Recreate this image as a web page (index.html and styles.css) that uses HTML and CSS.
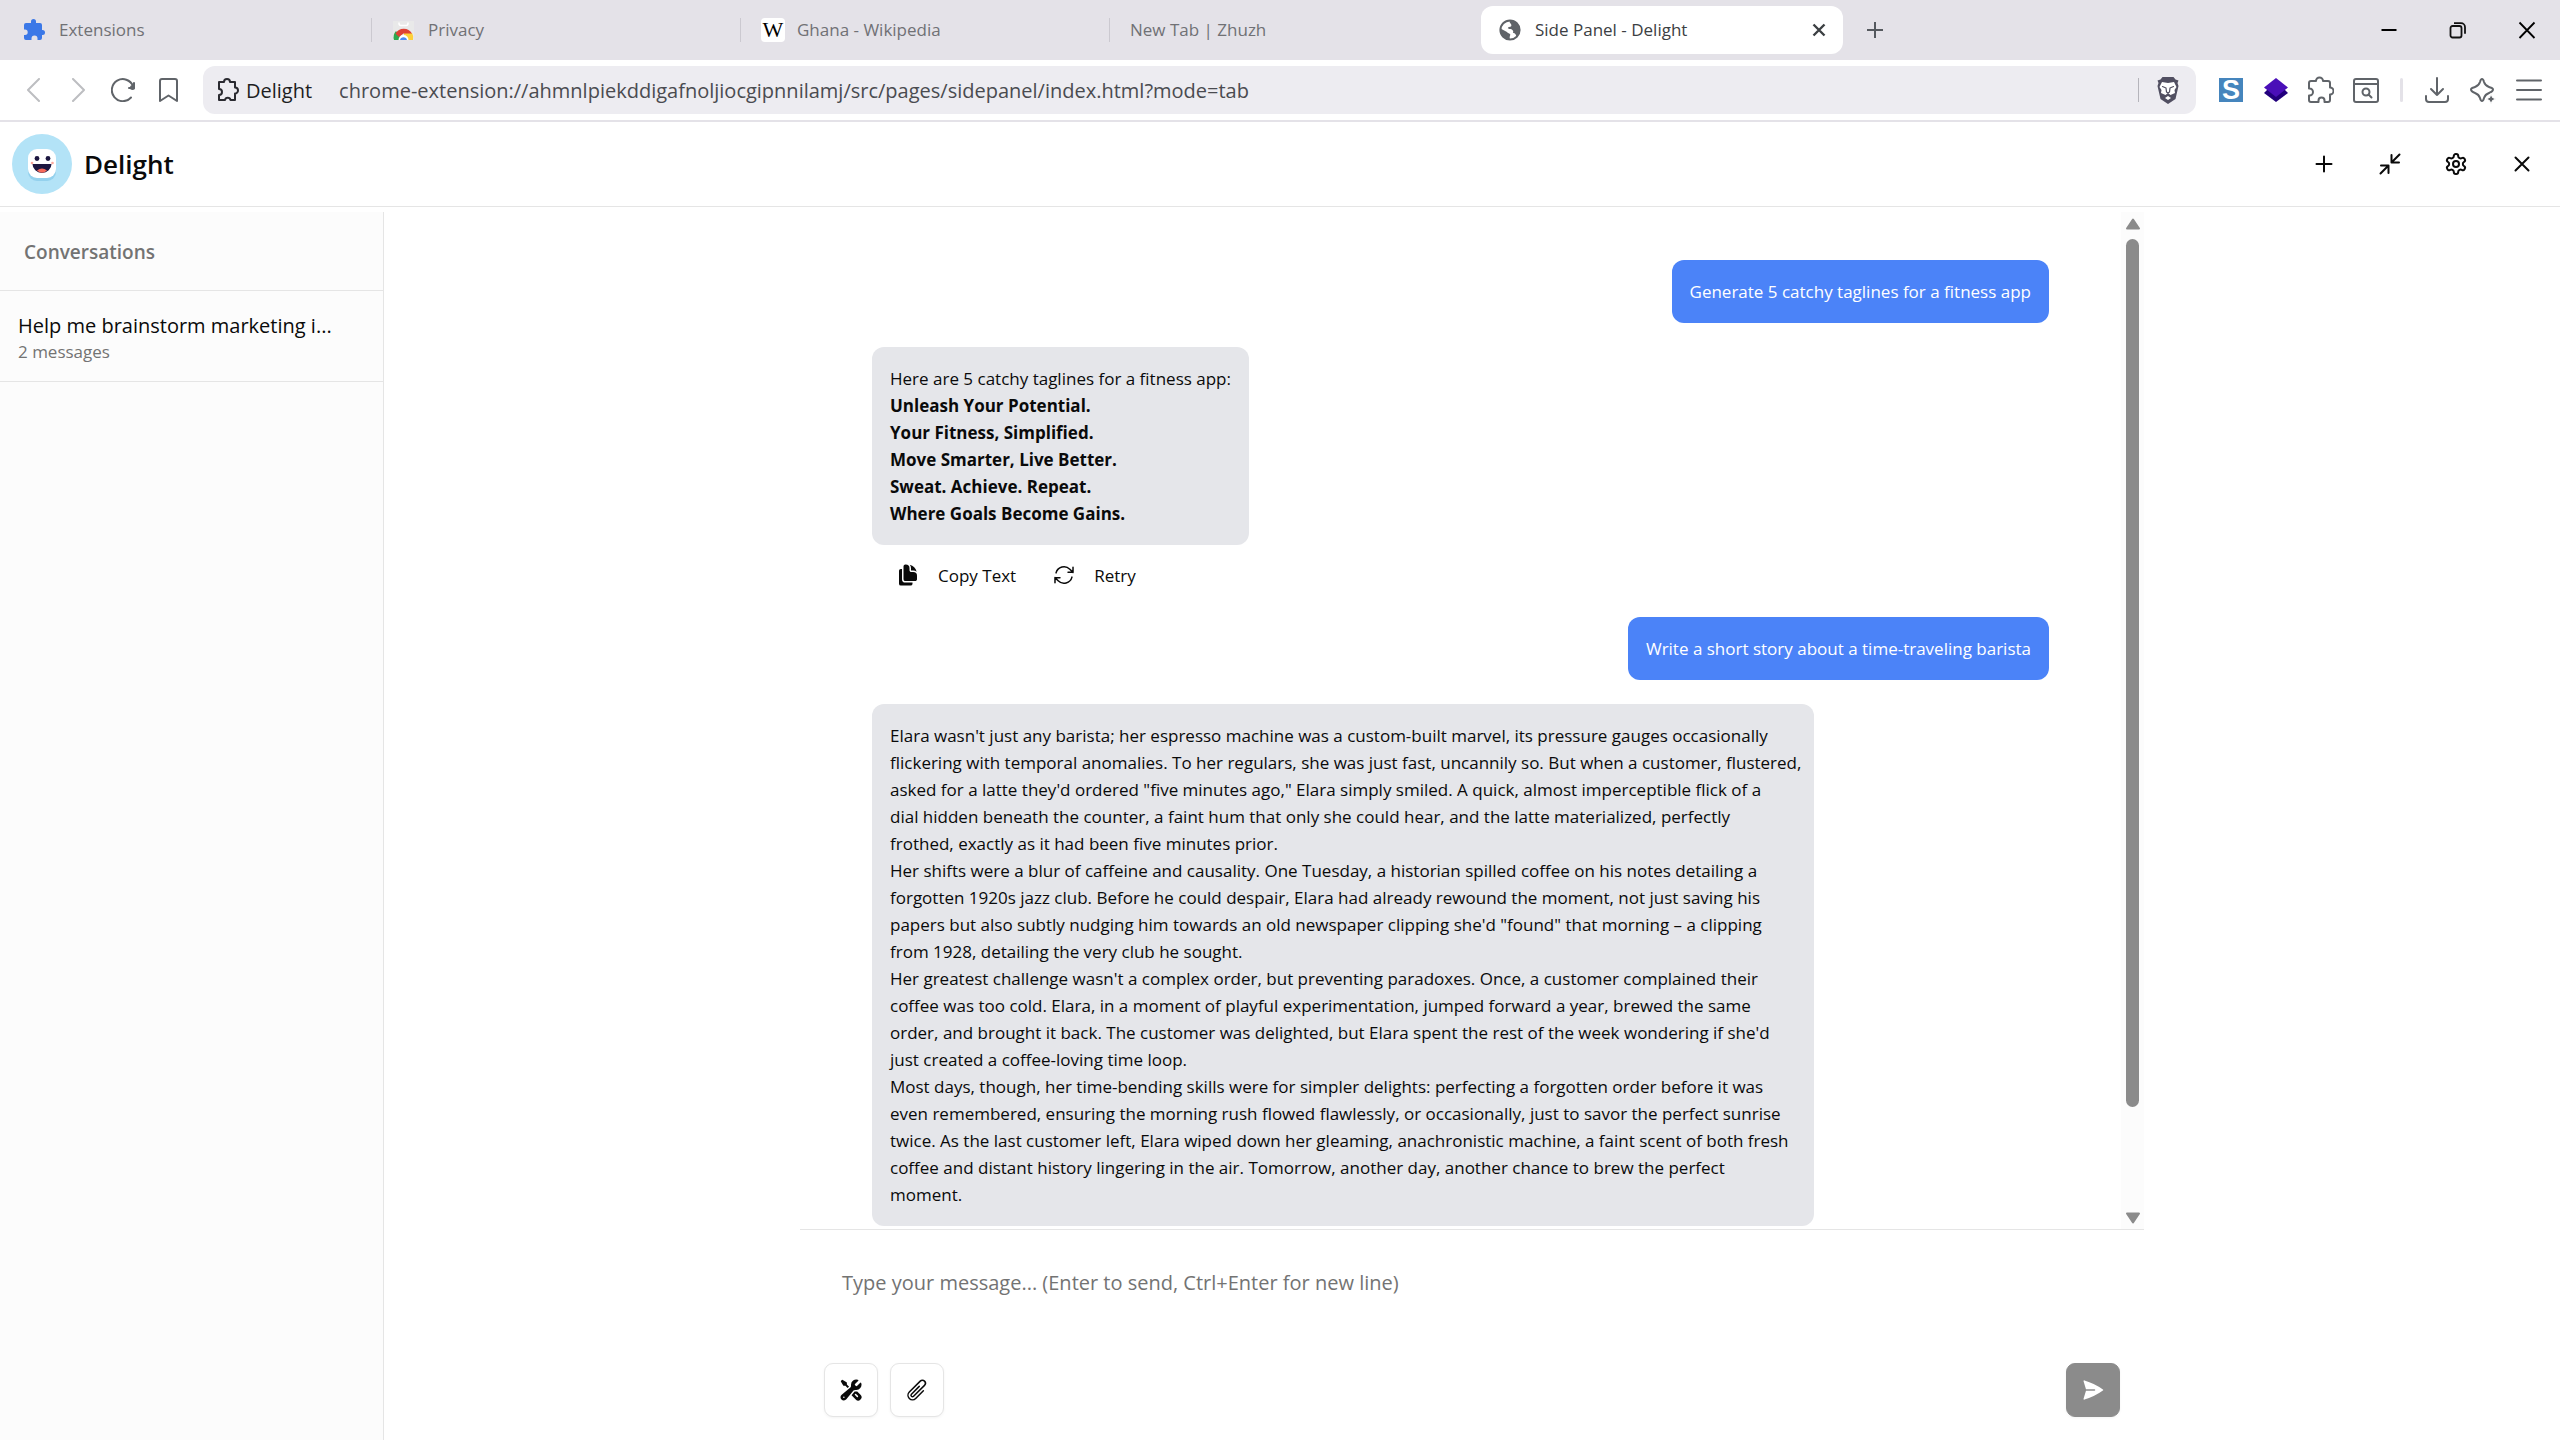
FILE: index.html
```html
<!DOCTYPE html>
<html lang="en">
<head>
<meta charset="utf-8">
<meta name="viewport" content="width=device-width, initial-scale=1">
<title>Side Panel - Delight</title>
<link rel="stylesheet" href="styles.css">
</head>
<body>
<div class="window">

  <div class="tab-strip">
    <nav class="tabs" aria-label="Open tabs">
      <a class="tab tab-first" href="#">
        <svg class="icon" viewBox="0 0 24 24" fill="#3b78e7"><path d="M1 7q0-2 2-2h5V3.500a2.500 2.500 0 0 1 5 0V5h4q2 0 2 2v5h.5a2.500 2.500 0 0 1 0 5H19v3q0 2-2 2h-2.500v-1.500a3 3 0 0 0-6 0V22H3q-2 0-2-2v-3h1a2.700 2.700 0 0 0 0-5.400H1z"/></svg>
        <span>Extensions</span>
      </a>
      <a class="tab" href="#">
        <svg class="icon" viewBox="0 0 24 24"><path fill="#e9e9e9" d="M1 3h21v19H1z"/><path d="M7 4.500v1a2 2 0 0 0 2 2h5a2 2 0 0 0 2-2v-1" fill="none" stroke="#fff" stroke-width="1.500"/><path d="M2 22a9.500 9.500 0 0 1 2-9l7 9z" fill="#2da94f"/><path d="M12 15h8a9 9 0 0 1 1 7h-9z" fill="#fdd03b"/><path d="M3.500 15.500a9.500 9.500 0 0 1 16.500 0h-8.500L7 19z" fill="#de4135"/><path d="M6.500 22a5 5 0 0 1 10 0z" fill="#fff"/><path d="M8 22a3.600 3.600 0 0 1 7 0z" fill="#4a8af4"/></svg>
        <span>Privacy</span>
      </a>
      <a class="tab" href="#">
        <span class="icon wiki" aria-hidden="true">W</span>
        <span>Ghana - Wikipedia</span>
      </a>
      <a class="tab" href="#"><span>New Tab | Zhuzh</span></a>
      <div class="tab tab-active">
        <svg class="icon" viewBox="0 0 24 24"><circle cx="11" cy="12" r="9.600" fill="#fff" stroke="#5f6368" stroke-width="2"/><path d="M11 2a10 10 0 0 1 10 10c0 3-2 6-4 8 1-3-1-5-3-5 1-2-1-4-3-4-2 0-3-1-1-2 2 0 3-1 2-3-1-1-2-2-1-4z" fill="#5f6368"/><path d="M1.500 10.500 8 14c0 1 2 1 3 2s-1 2 0 5.500A10 10 0 0 1 1.500 10.500z" fill="#5f6368"/></svg>
        <span>Side Panel - Delight</span>
        <button class="tab-close" aria-label="Close tab"><svg class="icon" viewBox="0 0 24 24" fill="none" stroke="#3c4043" stroke-width="2.400"><path d="m6.500 6.500 11 11m0-11-11 11"/></svg></button>
      </div>
      <button class="new-tab" aria-label="New tab"><svg class="icon" viewBox="0 0 24 24" fill="none" stroke="#55595e" stroke-width="2"><path d="M12 4v16M4 12h16"/></svg></button>
    </nav>
    <div class="window-controls">
      <button aria-label="Minimize"><svg class="icon" viewBox="0 0 24 24" fill="none" stroke="#000" stroke-width="2"><path d="M4.500 12h15"/></svg></button>
      <button aria-label="Restore"><svg class="icon" viewBox="0 0 24 24" fill="none" stroke="#111" stroke-width="1.800"><rect x="4.500" y="8" width="11" height="11.500" rx="2"/><path d="M8 5.200h7a4 4 0 0 1 4 4v6.500"/></svg></button>
      <button aria-label="Close window"><svg class="icon" viewBox="0 0 24 24" fill="none" stroke="#000" stroke-width="1.800"><path d="m4.500 4.500 15 15.500m0-15.500-15 15.500"/></svg></button>
    </div>
  </div>

  <div class="toolbar">
    <div class="nav-buttons">
      <button class="dim" aria-label="Back"><svg class="icon" viewBox="0 0 24 24"><path d="m18 1-11 11 11 11"/></svg></button>
      <button class="dim" aria-label="Forward"><svg class="icon" viewBox="0 0 24 24"><path d="m7 1 11 11L7 23"/></svg></button>
      <button aria-label="Reload"><svg class="icon" viewBox="0 0 24 24"><path d="M20 19.500A11 11 0 1 1 22 8"/><circle cx="21.500" cy="9.500" r="2.500" fill="currentColor" stroke="none"/><path d="M23 5v5h-5"/></svg></button>
      <button aria-label="Bookmark"><svg class="icon" viewBox="0 0 24 24"><path d="M4 3q0-2 2-2h13q2 0 2 2v20l-8.500-5.500L4 23z"/></svg></button>
    </div>
    <div class="address-bar">
      <svg class="icon site" viewBox="0 0 24 24"><path d="M2 4h5a3 3 0 0 1 6 0h5v5.500a3 3 0 0 1 0 6V22h-4.500a2.800 2.800 0 0 0-5.500 0H2v-5a3 3 0 0 0 0-6z"/></svg>
      <label for="url">Delight</label>
      <input id="url" class="url" type="text" value="chrome-extension://ahmnlpiekddigafnoljiocgipnnilamj/src/pages/sidepanel/index.html?mode=tab">
      <span class="bar-divider"></span>
      <button aria-label="Shields"><svg class="icon-lg" viewBox="0 0 28 28"><path d="M8.500 1h11l2 2.500 3 1-1 2.500 1 3-3 13-7.500 5-7.500-5-3-13 1-3-1-2.500 3-1z" fill="#514f61"/><path d="m8 6 6 1 6-1 2.500 5-2 3 .5 3-4.500 2-2.500-2-2.500 2L7 17l.5-3-2-3z" fill="#fff"/><path d="M8.500 10.500 12 12m7.500-1.500L16 12m-4 0 .5 4 1.500 1 1.500-1 .5-4" fill="none" stroke="#514f61" stroke-width="1.200"/><path d="m11 22 3-2 3 2-3 2z" fill="#fff"/></svg></button>
    </div>
    <div class="extensions">
      <button class="ext-s" aria-label="S extension">S</button>
      <button aria-label="Layers extension"><svg class="icon" viewBox="0 0 24 24"><path d="M0 15 4 11h16l4 4-12 9z" fill="#22007c" stroke="none"/><path d="m12 0 12 9.500L12 19 0 9.500z" fill="#4a0fb8" stroke="none"/></svg></button>
      <button aria-label="Extensions"><svg class="icon-lg" viewBox="0 0 28 28"><path d="M3 7q0-2 2-2h5V5a3.500 3.500 0 0 1 7 0h5q2 0 2 2v4.500a3.300 3.300 0 0 1 0 7V24q0 2-2 2h-3.500v-1.500a3 3 0 0 0-6 0V26H5q-2 0-2-2v-4.500h.5a3.500 3.500 0 0 0 0-7H3z"/></svg></button>
      <button aria-label="Search tabs"><svg class="icon-lg" viewBox="0 0 28 28"><rect x="2" y="3" width="24" height="23" rx="2"/><path d="M2 8h24"/><circle cx="14" cy="16" r="3.500"/><path d="m16.500 18.500 3 3"/></svg></button>
      <span class="tool-divider"></span>
      <button aria-label="Downloads"><svg class="icon-lg" viewBox="0 0 28 28"><path d="M14 2v17m-6-6 6 6 6-6M3 20v3q0 3 3 3h16q3 0 3-3v-3"/></svg></button>
      <button aria-label="Assistant"><svg class="icon-lg" viewBox="0 0 28 28"><path d="M13 3c1 0 1.500 1 2 3 1 3 2 4 5 5 3 1 4 1 4 2.500S23 16 20 17c-3 1-4 2-5 5-.5 2-1 3-2 3s-1.500-1-2-3c-1-3-2-4-5-5-3-1-4-2-4-3.500S3 12 6 11c3-1 4-2 5-5 .5-2 1-3 2-3z"/><path d="m22 18 1.500 3.500L27 23l-3.500 1.500L22 28l-1.500-3.500L17 23l3.500-1.500z" fill="currentColor" stroke="#fff" stroke-width="1"/></svg></button>
      <button aria-label="Menu"><svg class="icon-lg" viewBox="0 0 28 28"><path d="M2 4.500h24M2 14h24M2 23.500h24"/></svg></button>
    </div>
  </div>

  <header class="app-header">
    <svg class="logo" viewBox="0 0 60 60" role="img" aria-label="Delight logo"><circle cx="30" cy="30" r="30" fill="#b3e3f7"/><rect x="16" y="18" width="28" height="29" rx="9" fill="#7fc4e6" opacity=".6"/><rect x="16" y="15" width="28" height="29" rx="9" fill="#fff"/><circle cx="25" cy="24.500" r="2.400" fill="#1c1640"/><circle cx="36" cy="24.500" r="2.400" fill="#1c1640"/><circle cx="20" cy="29" r="1.300" fill="#f9a79c"/><circle cx="40.500" cy="29" r="1.300" fill="#f9a79c"/><path d="M20.500 30h19a9.500 9 0 0 1-19 0z" fill="#1c1640"/><path d="M25 36.500q5-4 10 0-5 4.500-10 0z" fill="#f5695a"/></svg>
    <h1>Delight</h1>
    <div class="header-actions">
      <button aria-label="New conversation"><svg class="icon" viewBox="0 0 24 24"><path d="M12 4.500v15M4.500 12h15"/></svg></button>
      <button aria-label="Collapse"><svg class="icon" viewBox="0 0 24 24"><path d="m21.500 2.500-8 8m0-7.500v7.500H21M2.500 21.500l8-8m-7.500 0h7.500V21"/></svg></button>
      <button aria-label="Settings"><svg class="icon" viewBox="0 0 24 24"><path d="M12.220 2h-.44a2 2 0 0 0-2 2v.18a2 2 0 0 1-1 1.730l-.43.25a2 2 0 0 1-2 0l-.15-.08a2 2 0 0 0-2.730.73l-.22.38a2 2 0 0 0 .73 2.730l.15.1a2 2 0 0 1 1 1.720v.51a2 2 0 0 1-1 1.740l-.15.09a2 2 0 0 0-.73 2.730l.22.38a2 2 0 0 0 2.730.73l.15-.08a2 2 0 0 1 2 0l.43.25a2 2 0 0 1 1 1.730V20a2 2 0 0 0 2 2h.44a2 2 0 0 0 2-2v-.18a2 2 0 0 1 1-1.730l.43-.25a2 2 0 0 1 2 0l.15.08a2 2 0 0 0 2.730-.73l.22-.39a2 2 0 0 0-.73-2.730l-.15-.08a2 2 0 0 1-1-1.740v-.5a2 2 0 0 1 1-1.740l.15-.09a2 2 0 0 0 .73-2.730l-.22-.38a2 2 0 0 0-2.730-.73l-.15.08a2 2 0 0 1-2 0l-.43-.25a2 2 0 0 1-1-1.730V4a2 2 0 0 0-2-2z"/><circle cx="12" cy="12" r="3"/></svg></button>
      <button aria-label="Close"><svg class="icon" viewBox="0 0 24 24"><path d="m5.500 5.500 13 13m0-13-13 13"/></svg></button>
    </div>
  </header>

  <div class="app-body">
    <aside class="sidebar">
      <h2>Conversations</h2>
      <a class="conversation" href="#">
        <span class="conversation-title">Help me brainstorm marketing i...</span>
        <span class="conversation-count">2 messages</span>
      </a>
    </aside>

    <main class="chat">
      <div class="history">
        <div class="messages">
          <div class="bubble user">Generate 5 catchy taglines for a fitness app</div>
          <div class="reply">
            <div class="bubble bot">
              <p>Here are 5 catchy taglines for a fitness app:</p>
              <ul class="taglines">
                <li>Unleash Your Potential.</li>
                <li>Your Fitness, Simplified.</li>
                <li>Move Smarter, Live Better.</li>
                <li>Sweat. Achieve. Repeat.</li>
                <li>Where Goals Become Gains.</li>
              </ul>
            </div>
            <div class="reply-actions">
              <button><svg class="icon" viewBox="0 0 24 24" fill="currentColor"><path d="M7.500 3.375c0-1.036.84-1.875 1.875-1.875h.375a3.750 3.750 0 0 1 3.750 3.750v1.875C13.500 8.161 14.340 9 15.375 9h1.875A3.750 3.750 0 0 1 21 12.750v3.375C21 17.160 20.160 18 19.125 18h-9.750A1.875 1.875 0 0 1 7.500 16.125V3.375Z"/><path d="M15 5.250a5.230 5.230 0 0 0-1.279-3.434 9.768 9.768 0 0 1 6.963 6.963A5.230 5.230 0 0 0 17.250 7.500h-1.875A.375.375 0 0 1 15 7.125V5.250ZM4.875 6H6v10.125A3.375 3.375 0 0 0 9.375 19.500H16.500v1.125c0 1.035-.84 1.875-1.875 1.875h-9.750A1.875 1.875 0 0 1 3 20.625V7.875C3 6.839 3.840 6 4.875 6Z"/></svg><span>Copy Text</span></button>
              <button><svg class="icon" viewBox="0 0 24 24" fill="none" stroke="currentColor" stroke-width="1.500" stroke-linecap="round" stroke-linejoin="round"><path d="M16.023 9.348h4.992v-.001M2.985 19.644v-4.992m0 0h4.992m-4.993 0 3.181 3.183a8.250 8.250 0 0 0 13.803-3.700M4.031 9.865a8.250 8.250 0 0 1 13.803-3.700l3.181 3.182m0-4.991v4.990"/></svg><span>Retry</span></button>
            </div>
          </div>
          <div class="bubble user">Write a short story about a time-traveling barista</div>
          <div class="bubble bot story">
            <p>Elara wasn't just any barista; her espresso machine was a custom-built marvel, its pressure gauges occasionally<br>flickering with temporal anomalies. To her regulars, she was just fast, uncannily so. But when a customer, flustered,<br>asked for a latte they'd ordered "five minutes ago," Elara simply smiled. A quick, almost imperceptible flick of a<br>dial hidden beneath the counter, a faint hum that only she could hear, and the latte materialized, perfectly<br>frothed, exactly as it had been five minutes prior.</p>
            <p>Her shifts were a blur of caffeine and causality. One Tuesday, a historian spilled coffee on his notes detailing a<br>forgotten 1920s jazz club. Before he could despair, Elara had already rewound the moment, not just saving his<br>papers but also subtly nudging him towards an old newspaper clipping she'd "found" that morning – a clipping<br>from 1928, detailing the very club he sought.</p>
            <p>Her greatest challenge wasn't a complex order, but preventing paradoxes. Once, a customer complained their<br>coffee was too cold. Elara, in a moment of playful experimentation, jumped forward a year, brewed the same<br>order, and brought it back. The customer was delighted, but Elara spent the rest of the week wondering if she'd<br>just created a coffee-loving time loop.</p>
            <p>Most days, though, her time-bending skills were for simpler delights: perfecting a forgotten order before it was<br>even remembered, ensuring the morning rush flowed flawlessly, or occasionally, just to savor the perfect sunrise<br>twice. As the last customer left, Elara wiped down her gleaming, anachronistic machine, a faint scent of both fresh<br>coffee and distant history lingering in the air. Tomorrow, another day, another chance to brew the perfect<br>moment.</p>
          </div>
        </div>
        <div class="scrollbar" aria-hidden="true">
          <svg class="arrow" viewBox="0 0 16 12"><path d="m8 1.500 6 9H2z"/></svg>
          <div class="track"><div class="thumb"></div></div>
          <svg class="arrow" viewBox="0 0 16 12"><path d="m8 10.500 6-9H2z"/></svg>
        </div>
      </div>

      <form class="composer">
        <textarea aria-label="Message" placeholder="Type your message... (Enter to send, Ctrl+Enter for new line)"></textarea>
        <div class="composer-actions">
          <button type="button" class="square" aria-label="Tools"><svg class="icon" viewBox="0 0 24 24" fill="currentColor" fill-rule="evenodd"><path d="M12 6.750a5.250 5.250 0 0 1 6.775-5.025.75.75 0 0 1 .313 1.248l-3.320 3.319c.063.475.276.934.641 1.299.365.365.824.578 1.300.64l3.318-3.319a.75.75 0 0 1 1.248.313 5.250 5.250 0 0 1-5.472 6.756c-1.018-.086-1.870.1-2.309.634L7.344 21.300A3.298 3.298 0 1 1 2.700 16.657l8.684-7.151c.533-.44.72-1.291.634-2.309A5.342 5.342 0 0 1 12 6.750ZM4.117 19.125a.75.75 0 0 1 .75-.75h.008a.75.75 0 0 1 .75.75v.008a.75.75 0 0 1-.75.75h-.008a.75.75 0 0 1-.75-.75v-.008Z"/><path d="m10.076 8.640-2.201-2.200V4.874a.75.75 0 0 0-.364-.643l-3.750-2.250a.75.75 0 0 0-.916.113l-.75.75a.75.75 0 0 0-.113.916l2.250 3.750a.75.75 0 0 0 .643.364h1.564l2.062 2.062 1.575-1.297Z"/><path d="m12.556 17.329 4.183 4.182a3.375 3.375 0 0 0 4.773-4.773l-3.306-3.305a6.803 6.803 0 0 1-1.530.043c-.394-.034-.682-.006-.867.042a.589.589 0 0 0-.167.063l-3.086 3.748Zm3.414-1.360a.75.75 0 0 1 1.060 0l1.875 1.876a.75.75 0 1 1-1.060 1.060L15.970 17.030a.75.75 0 0 1 0-1.060Z"/></svg></button>
          <button type="button" class="square" aria-label="Attach file"><svg class="icon" viewBox="0 0 24 24" fill="none" stroke="currentColor" stroke-width="1.500" stroke-linecap="round" stroke-linejoin="round"><path d="m18.375 12.739-7.693 7.693a4.500 4.500 0 0 1-6.364-6.364l10.940-10.940A3 3 0 1 1 19.500 7.372L8.552 18.320m.009-.01-.01.01m5.699-9.941-7.810 7.810a1.500 1.500 0 0 0 2.112 2.130"/></svg></button>
          <button type="submit" class="square send" aria-label="Send"><svg class="icon" viewBox="0 0 24 24" fill="currentColor"><path d="M3.478 2.404a.75.75 0 0 0-.926.941l2.432 7.905H13.500a.75.75 0 0 1 0 1.500H4.984l-2.432 7.905a.75.75 0 0 0 .926.940 60.519 60.519 0 0 0 18.445-8.986.75.75 0 0 0 0-1.218A60.517 60.517 0 0 0 3.478 2.404Z"/></svg></button>
        </div>
      </form>
    </main>
  </div>
</div>
</body>
</html>
```
FILE: styles.css
```css
* { box-sizing: border-box; }

body {
  margin: 0;
  background: #fff;
  color: #0a0a0a;
  font-family: "Open Sans", "Noto Sans", sans-serif;
  font-size: 17px;
  line-height: 27px;
}

h1, h2, p, ul { margin: 0; padding: 0; }
a { color: inherit; text-decoration: none; }

button {
  display: flex;
  align-items: center;
  justify-content: center;
  padding: 0;
  border: 0;
  background: none;
  color: inherit;
  font: inherit;
}

.icon { width: 24px; height: 24px; flex: none; }
.icon-lg { width: 28px; height: 28px; flex: none; }

.window { display: flex; flex-direction: column; height: 100vh; }

/* Tab strip */
.tab-strip {
  display: flex;
  flex: none;
  height: 60px;
  padding: 0 11px 0 2px;
  background: #e4e2e8;
  color: #707175;
}
.tabs { display: flex; flex: 1; align-items: center; min-width: 0; }
.tab {
  display: flex;
  align-items: center;
  gap: 12px;
  flex: 0 1 369px;
  height: 24px;
  padding-left: 20px;
  border-left: 1px solid #cbc9d0;
  line-height: 24px;
  white-space: nowrap;
}
.tab-first { border-left-color: transparent; }
.tab-active {
  flex-basis: 362px;
  height: 48px;
  margin-left: 3px;
  padding: 0 12px 0 18px;
  border: 0;
  border-radius: 12px;
  background: #fff;
  color: #3c4043;
}
.tab-close { margin-left: auto; }
.new-tab { width: 36px; height: 36px; margin-left: 14px; }
.wiki {
  border-radius: 4px;
  background: #fff;
  color: #000;
  font: 22px/24px "Liberation Serif", serif;
  text-align: center;
}
.window-controls { display: flex; align-items: center; gap: 45px; padding-right: 10px; }
.window-controls button { width: 24px; height: 60px; }

/* Toolbar */
.toolbar {
  display: flex;
  align-items: center;
  flex: none;
  height: 62px;
  padding: 0 17px 0 21px;
  border-bottom: 2px solid #e4e2e8;
  background: #fff;
  color: #606469;
}
.toolbar svg { fill: none; stroke: currentColor; stroke-width: 2; stroke-linecap: round; stroke-linejoin: round; }
.nav-buttons { display: flex; gap: 21px; width: 182px; }
.dim { color: #bdbec1; }
.address-bar {
  display: flex;
  align-items: center;
  flex: 1;
  height: 48px;
  padding: 0 14px;
  border-radius: 12px;
  background: #edecf1;
  font-size: 20px;
}
.address-bar label { margin: 0 27px 0 5px; color: #1d1d22; }
.address-bar .site { color: #2a2a30; }
.address-bar .icon-lg { stroke: none; }
.url {
  flex: 1;
  min-width: 0;
  padding: 0;
  border: 0;
  outline: 0;
  background: none;
  color: #4a4b50;
  font: inherit;
}
.bar-divider { width: 1px; height: 24px; margin-right: 15px; background: #b5b4bb; }
.extensions { display: flex; align-items: center; gap: 18px; margin-left: 23px; }
.ext-s {
  width: 24px;
  height: 24px;
  background: #4585bd;
  color: #fff;
  font: bold 27px/24px "Liberation Sans", sans-serif;
}
.extensions .ext-s { margin-right: 3px; }
.tool-divider { width: 3px; height: 24px; margin: 0 2px; border-radius: 2px; background: #e4e2e8; }

/* App header */
.app-header {
  display: flex;
  align-items: center;
  flex: none;
  gap: 12px;
  height: 85px;
  padding: 0 26px 0 12px;
  border-bottom: 1px solid #e5e5e5;
}
.logo { width: 60px; height: 60px; flex: none; }
.app-header h1 { font-size: 26px; font-weight: 600; line-height: 36px; }
.header-actions { display: flex; gap: 42px; margin-left: auto; }
.header-actions svg { fill: none; stroke: currentColor; stroke-width: 2; stroke-linecap: round; stroke-linejoin: round; }

/* Body */
.app-body { display: flex; flex: 1; min-height: 0; padding-top: 5px; }
.sidebar {
  flex: none;
  width: 384px;
  border-right: 1px solid #e5e5e5;
  background: #fcfcfc;
}
.sidebar h2 {
  padding: 27px 24px 24px;
  border-bottom: 1px solid #e5e5e5;
  color: #737373;
  font-size: 19px;
  font-weight: 600;
  line-height: 27px;
}
.conversation {
  display: flex;
  flex-direction: column;
  padding: 20px 18px 17px;
  border-bottom: 1px solid #e5e5e5;
}
.conversation-title { font-size: 20px; line-height: 29px; white-space: nowrap; }
.conversation-count { color: #737373; font-size: 17px; line-height: 24px; }

.chat {
  display: flex;
  flex: 0 1 1344px;
  flex-direction: column;
  min-width: 0;
  margin: 0 auto;
}
.history { display: flex; flex: 1; min-height: 0; }
.messages {
  display: flex;
  flex: 1;
  flex-direction: column;
  align-items: flex-start;
  gap: 24px;
  min-width: 0;
  padding: 48px 72px 0;
  overflow: hidden;
}
.bubble { max-width: 80%; padding: 18px; border-radius: 12px; }
.user { align-self: flex-end; background: #4b83f8; color: #fff; }
.bot { width: fit-content; background: #e5e6ea; }
.story { width: 80%; white-space: nowrap; }
.reply .bubble { max-width: none; }
.taglines { list-style: none; font-weight: 700; }
.reply-actions { display: flex; gap: 36px; height: 36px; margin-top: 12px; padding-left: 24px; font-weight: 500; }
.reply-actions button { gap: 18px; }

.scrollbar {
  display: flex;
  flex: none;
  flex-direction: column;
  align-items: center;
  gap: 9px;
  width: 23px;
  padding: 6px 0 5px;
  background: #fcfcfc;
}
.arrow { width: 16px; height: 12px; fill: #8b8b8b; stroke: #8b8b8b; stroke-width: 2; stroke-linejoin: round; }
.track { flex: 1; width: 13px; }
.thumb { height: 90%; border-radius: 7px; background: #8b8b8b; }

.composer { flex: none; padding: 24px 24px 23px; border-top: 1px solid #e5e5e5; }
.composer textarea {
  display: block;
  width: 100%;
  height: 97px;
  padding: 14px 18px;
  border: 0;
  outline: 0;
  resize: none;
  background: none;
  font: 20px/29px "Open Sans", "Noto Sans", sans-serif;
}
.composer textarea::placeholder { color: #737373; opacity: 1; }
.composer-actions { display: flex; gap: 12px; margin-top: 12px; }
.square {
  width: 54px;
  height: 54px;
  border: 1px solid #e5e5e5;
  border-radius: 9px;
  background: #fff;
  box-shadow: 0 1px 3px #0000000d;
}
.send { margin-left: auto; border-color: #8b8b8b; background: #8b8b8b; color: #fff; }
```
